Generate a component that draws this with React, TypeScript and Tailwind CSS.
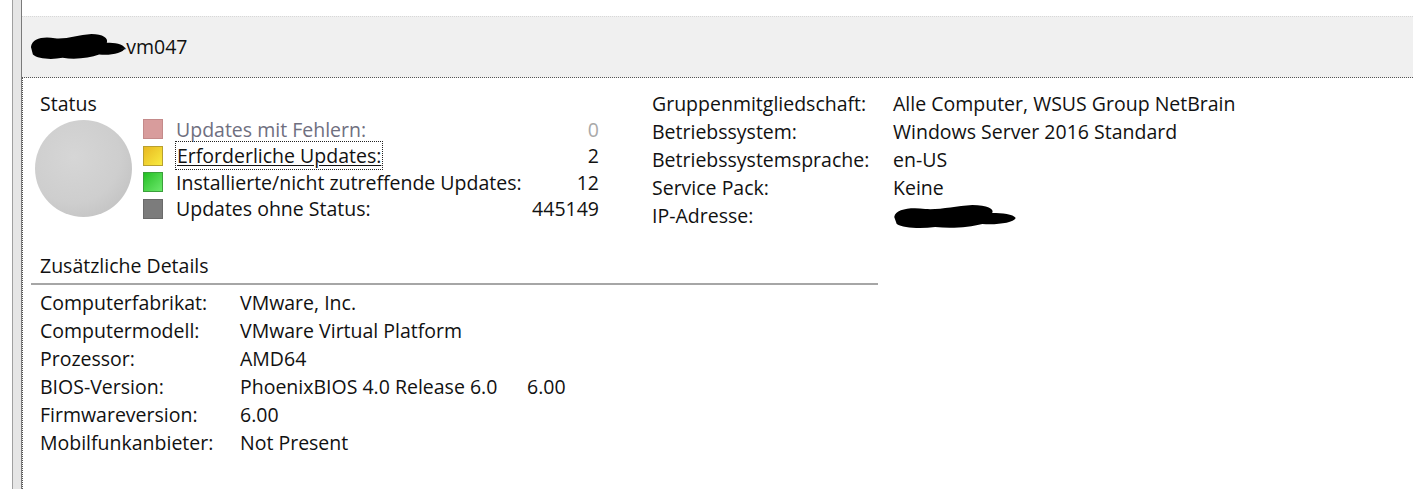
import React from 'react';

const statusRows = [
  { label: 'Updates mit Fehlern:', value: '0', box: 'bg-[#d89c9c] border-[#c48a8a]', text: 'text-[#6f6f7f]', num: 'text-[#a9a9a9]' },
  { label: 'Erforderliche Updates:', value: '2', box: 'bg-gradient-to-br from-[#e8b820] to-[#f8ec40] border-[#b8a030]', text: 'text-[#111]', num: 'text-[#111]', focus: true },
  { label: 'Installierte/nicht zutreffende Updates:', value: '12', box: 'bg-gradient-to-br from-[#1ec01e] to-[#6ae86a] border-[#3aa03a]', text: 'text-[#111]', num: 'text-[#111]' },
  { label: 'Updates ohne Status:', value: '445149', box: 'bg-[#7c7c7c] border-[#6a6a6a]', text: 'text-[#111]', num: 'text-[#111]' },
];

const computerInfo = [
  ['Gruppenmitgliedschaft:', 'Alle Computer, WSUS Group NetBrain'],
  ['Betriebssystem:', 'Windows Server 2016 Standard'],
  ['Betriebssystemsprache:', 'en-US'],
  ['Service Pack:', 'Keine'],
  ['IP-Adresse:', ''],
];

const details = [
  ['Computerfabrikat:', 'VMware, Inc.'],
  ['Computermodell:', 'VMware Virtual Platform'],
  ['Prozessor:', 'AMD64'],
  ['BIOS-Version:', 'PhoenixBIOS 4.0 Release 6.0'],
  ['Firmwareversion:', '6.00'],
  ['Mobilfunkanbieter:', 'Not Present'],
];

// black marker scribble that hides the host name / ip
const Redacted = ({ className }: { className?: string }) => (
  <svg className={className} viewBox="0 0 100 24" preserveAspectRatio="none">
    <path
      d="M1 12 C2 4 14 2 26 4 C38 5 50 1 64 0 C76 0 82 4 80 8 C88 8 97 9 99 13 C97 18 84 20 72 19 C62 22 48 24 34 22 C22 24 8 23 3 19 Z"
      fill="#000"
    />
  </svg>
);

const App = () => {
  return (
    <div className="w-[1413px] h-[489px] bg-white flex overflow-hidden font-['Open_Sans',sans-serif] text-[19.5px] text-[#111]">
      <div className="w-3 shrink-0" />
      <div className="w-[10px] shrink-0 border-l border-[#a0a0a0] border-r border-r-[#7a7a7a] bg-[#e6e6e6]" />

      <div className="flex-1 flex flex-col">
        <div className="h-4 shrink-0" />
        <div className="h-[62px] shrink-0 border-t border-[#d8d8d8] border-b border-b-[#555] border-dotted bg-[#f0f0f0] flex items-center pl-2">
          <div className="flex items-center">
            <Redacted className="w-[96px] h-[26px] -mr-[6px]" />
            <span className="leading-none">-vm047</span>
          </div>
        </div>

        <div className="flex-1 border-l border-dotted border-[#555] pt-3">
          <div className="flex">
            {/* status block */}
            <div className="w-[628px] shrink-0">
              <div className="pl-[17px] h-[28px] flex items-center">Status</div>
              <div className="flex pl-[12px] -mt-[2px]">
                <div className="w-[97px] h-[97px] mt-[4px] rounded-full bg-[radial-gradient(circle_at_40%_38%,#d6d6d6_0%,#cecece_55%,#bdbdbd_95%,#c8c8c8_100%)]" />
                <div className="ml-[11px] w-[456px]">
                  {statusRows.map((r) => (
                    <div key={r.label} className="h-[26.5px] flex items-center">
                      <div className={`w-5 h-5 shrink-0 border ${r.box}`} />
                      <div className={`ml-[13px] flex-1 whitespace-nowrap ${r.text}`}>
                        {r.focus ? (
                          <span className="outline outline-1 outline-dotted outline-[#222] px-[1px] underline underline-offset-2">{r.label}</span>
                        ) : (
                          r.label
                        )}
                      </div>
                      <div className={`text-right ${r.num}`}>{r.value}</div>
                    </div>
                  ))}
                </div>
              </div>
            </div>

            {/* computer info */}
            <div className="pl-[1px]">
              {computerInfo.map(([k, v]) => (
                <div key={k} className="h-[28px] flex items-center whitespace-nowrap">
                  <div className="w-[241px]">{k}</div>
                  {v ? <div>{v}</div> : <Redacted className="w-[124px] h-[24px] mt-[2px]" />}
                </div>
              ))}
            </div>
          </div>

          <div className="mt-[22px] pl-[17px] h-[28px] flex items-center">Zusätzliche Details</div>
          <div className="ml-[8px] w-[847px] border-t-2 border-[#a6a6a6] mt-[3px]" />

          <div className="pl-[17px] pt-[4px]">
            {details.map(([k, v]) => (
              <div key={k} className="h-[28px] flex items-center whitespace-nowrap">
                <div className="w-[200px]">{k}</div>
                <div className={k === 'BIOS-Version:' ? 'w-[287px]' : ''}>{v}</div>
                {k === 'BIOS-Version:' && <div>6.00</div>}
              </div>
            ))}
          </div>
        </div>
      </div>
    </div>
  );
};

export default App;
